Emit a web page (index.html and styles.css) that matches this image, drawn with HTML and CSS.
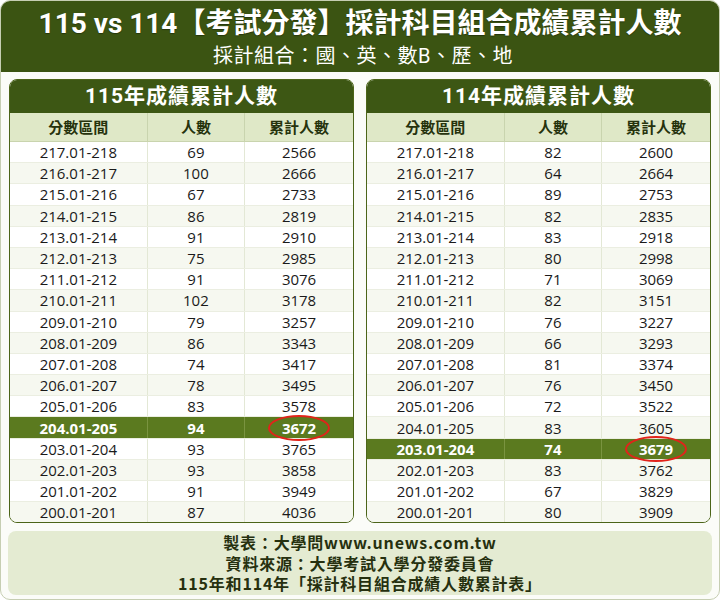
FILE: index.html
```html
<!DOCTYPE html>
<html lang="zh-Hant">
<head>
<meta charset="utf-8">
<link rel="stylesheet" href="styles.css">
</head>
<body>
<div class="frame">
  <header class="head">
    <h1 class="title">115 vs 114【考試分發】採計科目組合成績累計人數</h1>
    <div class="sub">採計組合：國、英、數B、歷、地</div>
  </header>
  <div class="panels">
    <section class="panel">
      <div class="ptitle">115年成績累計人數</div>
      <table class="tbl">
        <colgroup><col class="c1"><col class="c2"><col class="c3"></colgroup>
        <thead><tr><th>分數區間</th><th>人數</th><th>累計人數</th></tr></thead>
        <tbody>
          <tr><td>217.01-218</td><td>69</td><td>2566</td></tr>
          <tr><td>216.01-217</td><td>100</td><td>2666</td></tr>
          <tr><td>215.01-216</td><td>67</td><td>2733</td></tr>
          <tr><td>214.01-215</td><td>86</td><td>2819</td></tr>
          <tr><td>213.01-214</td><td>91</td><td>2910</td></tr>
          <tr><td>212.01-213</td><td>75</td><td>2985</td></tr>
          <tr><td>211.01-212</td><td>91</td><td>3076</td></tr>
          <tr><td>210.01-211</td><td>102</td><td>3178</td></tr>
          <tr><td>209.01-210</td><td>79</td><td>3257</td></tr>
          <tr><td>208.01-209</td><td>86</td><td>3343</td></tr>
          <tr><td>207.01-208</td><td>74</td><td>3417</td></tr>
          <tr><td>206.01-207</td><td>78</td><td>3495</td></tr>
          <tr><td>205.01-206</td><td>83</td><td>3578</td></tr>
          <tr class="hl"><td>204.01-205</td><td>94</td><td><span class="circ">3672</span></td></tr>
          <tr><td>203.01-204</td><td>93</td><td>3765</td></tr>
          <tr><td>202.01-203</td><td>93</td><td>3858</td></tr>
          <tr><td>201.01-202</td><td>91</td><td>3949</td></tr>
          <tr><td>200.01-201</td><td>87</td><td>4036</td></tr>
        </tbody>
      </table>
    </section>
    <section class="panel">
      <div class="ptitle">114年成績累計人數</div>
      <table class="tbl">
        <colgroup><col class="c1"><col class="c2"><col class="c3"></colgroup>
        <thead><tr><th>分數區間</th><th>人數</th><th>累計人數</th></tr></thead>
        <tbody>
          <tr><td>217.01-218</td><td>82</td><td>2600</td></tr>
          <tr><td>216.01-217</td><td>64</td><td>2664</td></tr>
          <tr><td>215.01-216</td><td>89</td><td>2753</td></tr>
          <tr><td>214.01-215</td><td>82</td><td>2835</td></tr>
          <tr><td>213.01-214</td><td>83</td><td>2918</td></tr>
          <tr><td>212.01-213</td><td>80</td><td>2998</td></tr>
          <tr><td>211.01-212</td><td>71</td><td>3069</td></tr>
          <tr><td>210.01-211</td><td>82</td><td>3151</td></tr>
          <tr><td>209.01-210</td><td>76</td><td>3227</td></tr>
          <tr><td>208.01-209</td><td>66</td><td>3293</td></tr>
          <tr><td>207.01-208</td><td>81</td><td>3374</td></tr>
          <tr><td>206.01-207</td><td>76</td><td>3450</td></tr>
          <tr><td>205.01-206</td><td>72</td><td>3522</td></tr>
          <tr><td>204.01-205</td><td>83</td><td>3605</td></tr>
          <tr class="hl"><td>203.01-204</td><td>74</td><td><span class="circ">3679</span></td></tr>
          <tr><td>202.01-203</td><td>83</td><td>3762</td></tr>
          <tr><td>201.01-202</td><td>67</td><td>3829</td></tr>
          <tr><td>200.01-201</td><td>80</td><td>3909</td></tr>
        </tbody>
      </table>
    </section>
  </div>
  <footer class="foot">
    <div>製表：大學問www.unews.com.tw</div>
    <div>資料來源：大學考試入學分發委員會</div>
    <div>115年和114年「採計科目組合成績人數累計表」</div>
  </footer>
</div>
</body>
</html>
```

FILE: styles.css
```css
html, body {
  margin: 0;
  padding: 0;
  background: #ffffff;
}
.frame {
  box-sizing: border-box;
  width: 720px;
  height: 600px;
  border: 1px solid #c6ceb2;
  border-radius: 10px;
  overflow: hidden;
  background: #fbfcf8;
  font-family: "Open Sans", "Noto Sans CJK TC", sans-serif;
  color: #1a1a1a;
}
.head {
  height: 71px;
  background: #3b5412;
  color: #fff;
  text-align: center;
  font-family: "Roboto", "Noto Sans CJK TC", sans-serif;
}
.title {
  margin: 0;
  padding-top: 4px;
  font-size: 28px;
  line-height: 38px;
  font-weight: 700;
  text-shadow: 0 1px 1px rgba(0,0,0,0.35);
}
.sub {
  font-size: 20px;
  line-height: 26px;
  padding-left: 6px;
  letter-spacing: 0.5px;
}
.panels {
  display: flex;
  gap: 12px;
  padding: 7px 8px 0 8px;
}
.panel {
  flex: 1;
  border: 1.5px solid #4c6519;
  border-radius: 8px;
  overflow: hidden;
  background: #fff;
}
.ptitle {
  height: 33px;
  line-height: 33px;
  background: #3d5714;
  color: #fff;
  text-align: center;
  font-family: "Roboto", "Noto Sans CJK TC", sans-serif;
  font-size: 21px;
  font-weight: 700;
  letter-spacing: 1px;
}
.tbl {
  width: 100%;
  border-collapse: collapse;
  table-layout: fixed;
}
.c1 { width: 40%; }
.c2 { width: 28.4%; }
.tbl th {
  height: 28px;
  padding: 0;
  background: #dfe8c7;
  color: #26330d;
  font-size: 15px;
  line-height: 20px;
  font-weight: 700;
  border-left: 1px solid #c9d4ae;
  border-bottom: 1px solid #c9d4ae;
}
.tbl td {
  height: 20.2px;
  padding: 0;
  text-align: center;
  font-size: 15px;
  line-height: 20px;
  border-left: 1px solid #e3e8d5;
  border-bottom: 1px solid #ebeee1;
}
.tbl th:first-child, .tbl td:first-child { border-left: none; }
.tbl tbody tr:nth-child(even) td { background: #f6f8f0; }
.tbl tbody tr:last-child td { border-bottom: none; }
.tbl tbody tr.hl td {
  background: #5b7a1f;
  color: #fff;
  font-weight: 700;
  border-left-color: #7a9440;
}
.circ {
  position: relative;
  display: inline-block;
}
.circ::after {
  content: "";
  position: absolute;
  left: 50%;
  top: 50%;
  width: 58px;
  height: 22px;
  margin-left: -31px;
  margin-top: -13px;
  border: 2px solid #e2231a;
  border-radius: 50%;
}
.foot {
  margin: 8px 7px 0 7px;
  height: 64px;
  box-sizing: border-box;
  padding-top: 1px;
  background: #e4ebd2;
  border-radius: 8px;
  text-align: center;
  color: #26300f;
  font-family: "Noto Sans CJK TC", sans-serif;
  font-size: 16px;
  font-weight: 700;
  line-height: 20.5px;
  letter-spacing: 0.8px;
}
```
